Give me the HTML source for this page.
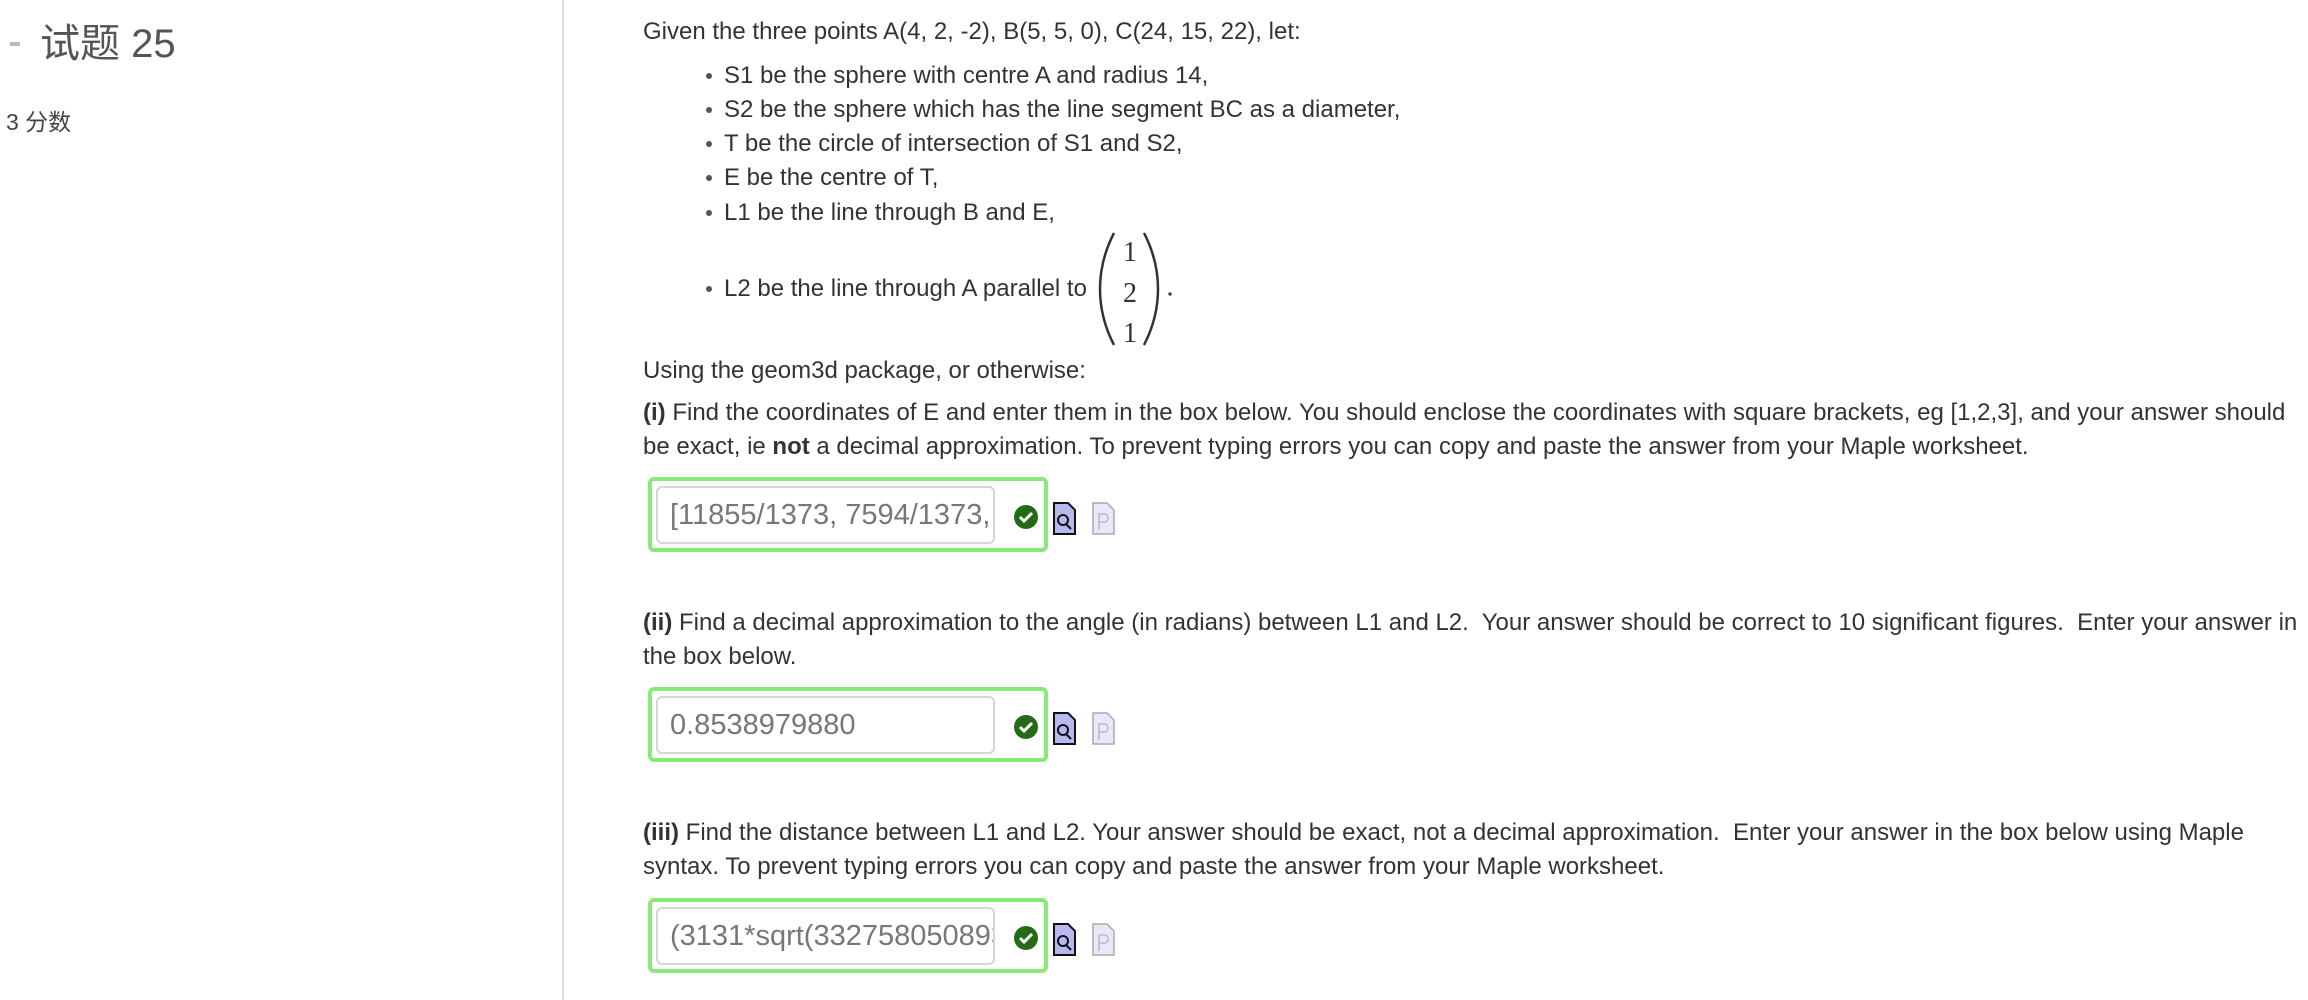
<!DOCTYPE html>
<html><head><meta charset="utf-8"><style>
body{margin:0;width:2308px;height:1000px;background:#fff;position:relative;overflow:hidden;font-family:"Liberation Sans","Noto Sans CJK SC",sans-serif;color:#333;}
.a{position:absolute;white-space:nowrap;}
.t{font-size:24px;line-height:34px;}
.dot{position:absolute;width:6px;height:6px;border-radius:50%;background:#555;}
.box{position:absolute;left:648px;width:400px;height:75px;border:4px solid #88e878;border-radius:6px;box-sizing:border-box;}
.inp{position:absolute;left:656px;width:339px;height:58px;border:2px solid #d6d6d6;border-radius:6px;box-sizing:border-box;font-size:29px;color:#777;padding-left:12px;line-height:54px;overflow:hidden;white-space:nowrap;}
</style></head><body>
<div style="position:absolute;left:562px;top:0;width:2px;height:1000px;background:#ddd"></div>
<div class="a" style="left:10px;top:42px;width:10px;height:4px;background:#bbb"></div>
<div class="a" style="left:40px;top:18px;font-size:40px;color:#555;line-height:52px">试题 25</div>
<div class="a" style="left:6px;top:107px;font-size:23px;color:#444;line-height:30px">3 分数</div>

<div class="a t" style="left:643px;top:15px">Given the three points A(4, 2, -2), B(5, 5, 0), C(24, 15, 22), let:</div>
<div class="dot" style="left:706px;top:73px"></div><div class="a t" style="left:724px;top:59px">S1 be the sphere with centre A and radius 14,</div>
<div class="dot" style="left:706px;top:107px"></div><div class="a t" style="left:724px;top:93px">S2 be the sphere which has the line segment BC as a diameter,</div>
<div class="dot" style="left:706px;top:141px"></div><div class="a t" style="left:724px;top:127px">T be the circle of intersection of S1 and S2,</div>
<div class="dot" style="left:706px;top:175px"></div><div class="a t" style="left:724px;top:161px">E be the centre of T,</div>
<div class="dot" style="left:706px;top:210px"></div><div class="a t" style="left:724px;top:196px">L1 be the line through B and E,</div>
<div class="dot" style="left:706px;top:286px"></div><div class="a t" style="left:724px;top:272px">L2 be the line through A parallel to</div>
<svg class="a" style="left:1098px;top:230px" width="80" height="118">
<path d="M16 3 Q2 30 2 59 Q2 88 16 115" stroke="#333" stroke-width="2.5" fill="none"/>
<path d="M46 3 Q60 30 60 59 Q60 88 46 115" stroke="#333" stroke-width="2.5" fill="none"/>
<g font-family="Liberation Serif,serif" font-size="28" fill="#333" text-anchor="middle"><text x="32" y="31">1</text><text x="32" y="72">2</text><text x="32" y="112">1</text></g>
<circle cx="72" cy="64" r="1.6" fill="#333"/></svg>
<div class="a t" style="left:643px;top:354px">Using the geom3d package, or otherwise:</div>
<div class="a t" style="left:643px;top:396px"><b>(i)</b> Find the coordinates of E and enter them in the box below. You should enclose the coordinates with square brackets, eg [1,2,3], and your answer should</div>
<div class="a t" style="left:643px;top:430px">be exact, ie <b>not</b> a decimal approximation. To prevent typing errors you can copy and paste the answer from your Maple worksheet.</div>

<div class="box" style="top:477px"></div><div class="inp" style="top:486px">[11855/1373, 7594/1373, 3</div>

<div class="a t" style="left:643px;top:606px"><b>(ii)</b> Find a decimal approximation to the angle (in radians) between L1 and L2.&nbsp; Your answer should be correct to 10 significant figures.&nbsp; Enter your answer in</div>
<div class="a t" style="left:643px;top:640px">the box below.</div>
<div class="box" style="top:687px"></div><div class="inp" style="top:696px">0.8538979880</div>

<div class="a t" style="left:643px;top:816px"><b>(iii)</b> Find the distance between L1 and L2. Your answer should be exact, not a decimal approximation.&nbsp; Enter your answer in the box below using Maple</div>
<div class="a t" style="left:643px;top:850px">syntax. To prevent typing errors you can copy and paste the answer from your Maple worksheet.</div>
<div class="box" style="top:898px"></div><div class="inp" style="top:907px">(3131*sqrt(3327580508931</div>

<svg class="a" style="left:1002px;top:497px" width="140" height="500">
<defs>
<g id="row">
<circle cx="24" cy="20" r="12" fill="#236b17"/><path d="M18 20 l4 4 l8 -8" stroke="#fff" stroke-width="3" fill="none"/>
<path d="M52 6 h14 l7 7 v24 h-21z" fill="#b8b8f0" stroke="#111" stroke-width="2"/><circle cx="61" cy="23" r="5" fill="none" stroke="#111" stroke-width="2"/><path d="M64 27 l5 5" stroke="#111" stroke-width="2"/>
<path d="M91 6 h14 l7 7 v24 h-21z" fill="#e8e8fa" stroke="#aaa" stroke-width="1.5"/><path d="M97 33 v-16 h5 q4 0 4 4 q0 4 -4 4 h-5" stroke="#bbb" fill="none" stroke-width="1.5"/>
</g></defs>
<use href="#row" y="0"/><use href="#row" y="210"/><use href="#row" y="421"/>
</svg>
</body></html>
